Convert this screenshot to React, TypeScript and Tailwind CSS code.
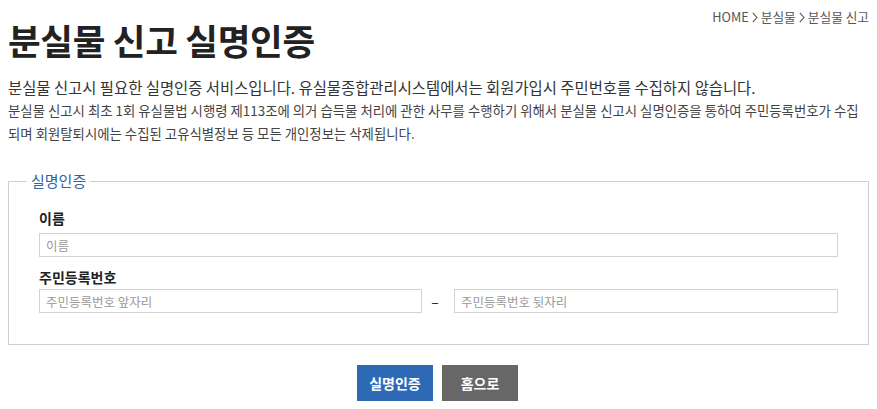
const font = "font-['Malgun_Gothic','Noto_Sans_CJK_KR',sans-serif]";

function Chevron() {
  return (
    <svg className="mx-[3px] inline-block h-[11px] w-[6px]" viewBox="0 0 6 11" fill="none">
      <path d="M0.8 0.8 L5 5.5 L0.8 10.2" stroke="#555" strokeWidth="1.1" />
    </svg>
  );
}

export default function App() {
  return (
    <div className={`${font} min-h-[409px] bg-white px-2 text-[#333]`}>
      <div className="flex items-start justify-between">
        <h1 className="mt-[17px] text-[35.5px] font-bold leading-[46px] tracking-[-0.3px] text-[#222]">
          분실물 신고 실명인증
        </h1>
        <div className="mt-[9px] flex items-center text-[12.7px] leading-[16px] text-[#555]">
          <span>HOME</span>
          <Chevron />
          <span>분실물</span>
          <Chevron />
          <span>분실물 신고</span>
        </div>
      </div>

      <p className="mt-[12px] text-[15.4px] leading-[24px] text-[#333]">
        분실물 신고시 필요한 실명인증 서비스입니다. 유실물종합관리시스템에서는 회원가입시 주민번호를 수집하지 않습니다.
      </p>
      <p className="text-[13.4px] leading-[23px] text-[#444]">
        분실물 신고시 최초 1회 유실물법 시행령 제113조에 의거 습득물 처리에 관한 사무를 수행하기 위해서 분실물 신고시 실명인증을 통하여 주민등록번호가 수집
        <br />
        되며 회원탈퇴시에는 수집된 고유식별정보 등 모든 개인정보는 삭제됩니다.
      </p>

      <fieldset className="mt-[26px] border border-[#cfcfcf] px-[18px] pb-[31px] pt-[17px]">
        <legend className="px-[4px] text-[15px] leading-[20px] text-[#2f65a7]">실명인증</legend>

        <div className="px-[12px]">
          <label className="block text-[14px] font-bold leading-[20px] text-[#222]">이름</label>
          <input
            className="mt-[5px] block h-[24px] w-full border border-[#d2d2d2] px-[6px] text-[12.5px] outline-none placeholder:text-[#999]"
            placeholder="이름"
          />

          <label className="mt-[9px] block text-[14px] font-bold leading-[22px] text-[#222]">주민등록번호</label>
          <div className="mt-[1px] flex items-center">
            <input
              className="block h-[24px] w-[383px] border border-[#d2d2d2] px-[6px] text-[12.5px] outline-none placeholder:text-[#999]"
              placeholder="주민등록번호 앞자리"
            />
            <span className="w-[28px] pr-[2px] text-center text-[14px] text-[#222]">–</span>
            <input
              className="ml-[4px] block h-[24px] flex-1 border border-[#d2d2d2] px-[6px] text-[12.5px] outline-none placeholder:text-[#999]"
              placeholder="주민등록번호 뒷자리"
            />
          </div>
        </div>
      </fieldset>

      <div className="mt-[20px] flex justify-center gap-[9px] pr-[2px]">
        <button className="h-[36px] w-[76px] bg-[#2e69b6] text-[14px] font-bold text-white">실명인증</button>
        <button className="h-[36px] w-[76px] bg-[#676767] text-[14px] font-bold text-white">홈으로</button>
      </div>
    </div>
  );
}
